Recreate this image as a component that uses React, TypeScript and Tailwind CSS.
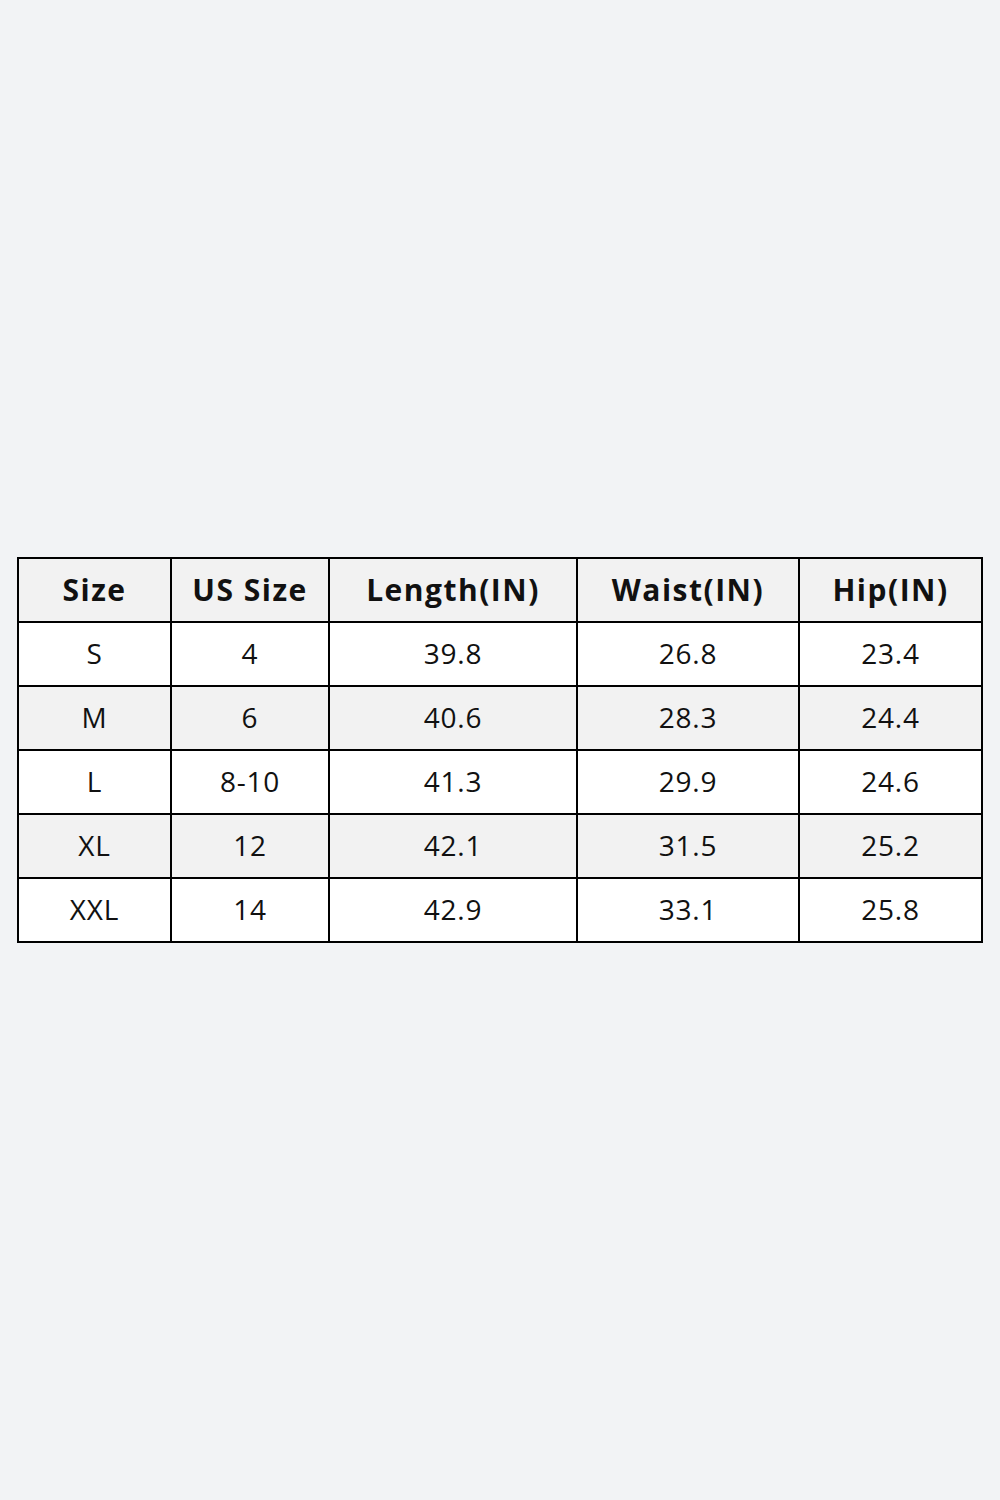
import React from "react";

const headers = ["Size", "US Size", "Length(IN)", "Waist(IN)", "Hip(IN)"];
const rows = [
  ["S", "4", "39.8", "26.8", "23.4"],
  ["M", "6", "40.6", "28.3", "24.4"],
  ["L", "8-10", "41.3", "29.9", "24.6"],
  ["XL", "12", "42.1", "31.5", "25.2"],
  ["XXL", "14", "42.9", "33.1", "25.8"],
];

export default function App() {
  return (
    <div className="min-h-[1500px] w-[1000px] bg-[#f2f3f5] flex items-center justify-center" style={{ fontFamily: '"Open Sans", "Noto Sans", sans-serif' }}>
      <div className="w-[966px] bg-black p-[2px] grid grid-cols-[151px_156px_246px_220px_181px] auto-rows-[62px] gap-[2px] text-[#111]">
        {headers.map((h) => (
          <div key={h} className="bg-[#f2f2f2] flex items-center justify-center text-[30px] font-bold tracking-[1.5px] pb-[1px]">
            {h}
          </div>
        ))}
        {rows.map((r, i) =>
          r.map((c, j) => (
            <div
              key={`${i}-${j}`}
              className={`${i % 2 === 1 ? "bg-[#f2f2f2]" : "bg-white"} flex items-center justify-center text-[28px] tracking-[0.8px] pb-[2px]`}
            >
              {c}
            </div>
          ))
        )}
      </div>
    </div>
  );
}
